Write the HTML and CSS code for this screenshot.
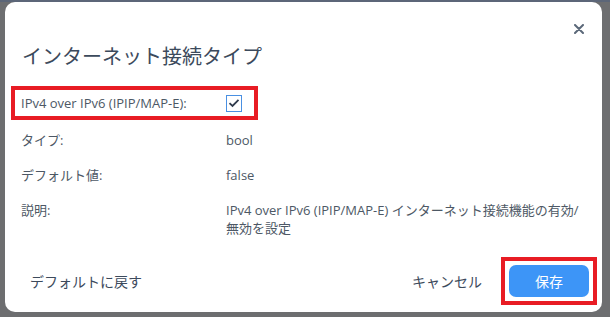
FILE: index.html
```html
<!DOCTYPE html>
<html lang="ja">
<head>
    <meta charset="UTF-8">
    <title>インターネット接続タイプ</title>
    <link rel="stylesheet" href="styles.css">
</head>
<body>
    <div class="backdrop">
        <div class="dialog">
            <div class="dialog-head">
                <h1>インターネット接続タイプ</h1>
                <span class="close">
                    <svg width="10" height="10" viewBox="0 0 10 10">
                        <path d="M1 1L9 9M9 1L1 9" stroke="#5b6879" stroke-width="2" stroke-linecap="round"/>
                    </svg>
                </span>
            </div>

            <div class="fields">
                <div class="row highlight">
                    <span class="label">IPv4 over IPv6 (IPIP/MAP-E):</span>
                    <span class="value">
                        <span class="checkbox">
                            <svg width="12" height="10" viewBox="0 0 12 10">
                                <path d="M1.5 5.2L4.5 8L10.5 1.8" fill="none" stroke="#2f3b4c" stroke-width="1.8"/>
                            </svg>
                        </span>
                    </span>
                </div>
                <div class="row">
                    <span class="label">タイプ:</span>
                    <span class="value">bool</span>
                </div>
                <div class="row">
                    <span class="label">デフォルト値:</span>
                    <span class="value">false</span>
                </div>
                <div class="row">
                    <span class="label">説明:</span>
                    <span class="value">IPv4 over IPv6 (IPIP/MAP-E) インターネット接続機能の有効/<br>無効を設定</span>
                </div>
            </div>

            <div class="dialog-foot">
                <a class="link-btn reset">デフォルトに戻す</a>
                <div class="actions">
                    <a class="link-btn">キャンセル</a>
                    <div class="highlight-box">
                        <button class="primary">保存</button>
                    </div>
                </div>
            </div>
        </div>
    </div>
</body>
</html>
```

FILE: styles.css
```css
body {
    margin: 0;
    background-color: #6d6e70;
    font-family: 'Open Sans', 'Noto Sans CJK JP', sans-serif;
    color: #4d5865;
}
.backdrop {
    height: 317px;
    padding: 2px 8px 0 5px;
    box-sizing: border-box;
    background: linear-gradient(#5c6678 0, #5c6678 2px, #6d6e70 2px);
}
.dialog {
    width: 597px;
    height: 310px;
    background: white;
    border-radius: 10px;
    display: flex;
    flex-direction: column;
    box-sizing: border-box;
}
.dialog-head {
    display: flex;
    justify-content: space-between;
    align-items: flex-start;
    padding: 22px 18px 0 17px;
    height: 84px;
    box-sizing: border-box;
}
h1 {
    margin: 20px 0 0;
    font-size: 20px;
    font-weight: normal;
    color: #3c4a5c;
    font-family: 'Noto Sans CJK JP', sans-serif;
    line-height: 24px;
}
.close {
    display: flex;
}
.fields {
    padding: 0 6px;
}
.row {
    display: grid;
    grid-template-columns: 205px 1fr;
    padding: 0 10px;
    min-height: 35px;
    align-items: start;
    font-size: 13px;
    line-height: 18px;
}
.row .label, .row .value {
    padding-top: 8px;
}
.highlight {
    width: 247px;
    box-sizing: border-box;
    border: 4px solid #e81c24;
    padding: 0 6px;
    min-height: 34px;
    align-items: center;
    margin-bottom: 3px;
}
.highlight .label, .highlight .value {
    padding-top: 0;
}
.checkbox {
    display: flex;
    width: 14px;
    height: 15px;
    border: 1px solid #4a90e2;
    align-items: center;
    justify-content: center;
}
.dialog-foot {
    margin-top: auto;
    display: flex;
    justify-content: space-between;
    align-items: center;
    padding: 0 5px 7px 25px;
}
.link-btn {
    font-size: 14px;
    color: #3c4a5c;
    font-family: 'Noto Sans CJK JP', sans-serif;
}
.actions {
    display: flex;
    align-items: center;
    gap: 19px;
}
.highlight-box {
    border: 4px solid #e81c24;
    padding: 4px;
}
button.primary {
    display: block;
    width: 80px;
    height: 32px;
    border: none;
    border-radius: 7px;
    background-color: #3d95f7;
    color: white;
    font-size: 14px;
    font-family: 'Noto Sans CJK JP', sans-serif;
}
```
